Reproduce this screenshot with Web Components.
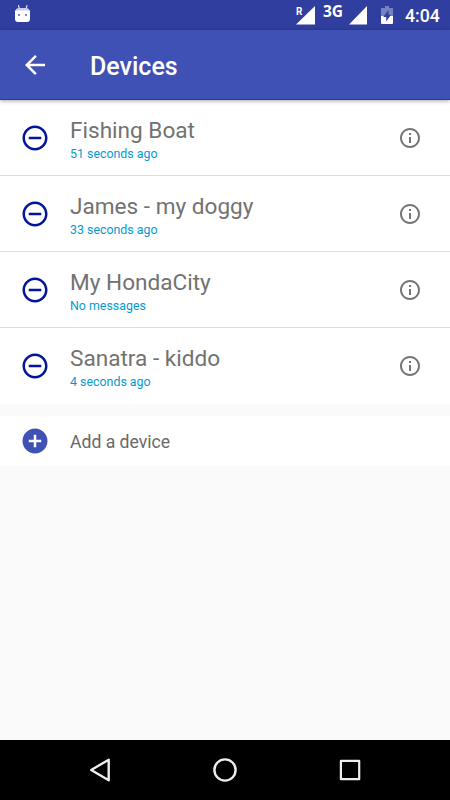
<!DOCTYPE html>
<html lang="en">
<head>
<meta charset="utf-8">
<title>Devices</title>
<style>
html, body { margin: 0; height: 100%; }
body { font-family: Roboto, "Noto Sans", sans-serif; background: #fafafa; overflow: hidden; }
</style>
</head>
<body>
<devices-screen></devices-screen>
<script>
function define(name, html) {
  const template = document.createElement('template');
  template.innerHTML = html;
  customElements.define(name, class extends HTMLElement {
    constructor() {
      super();
      this.attachShadow({ mode: 'open' }).append(template.content.cloneNode(true));
    }
  });
}

define('status-bar', `
<style>
:host { display: flex; align-items: center; height: 30px; background: #303f9f; color: #fff; flex: none; box-sizing: border-box; padding: 0 9px 0 14px; }
svg { display: block; flex: none; }
.space { flex: 1; }
.r { font: 700 10px/10px Roboto, sans-serif; align-self: flex-start; margin-top: 7px; width: 7px; margin-right: -7px; z-index: 1; }
.net { font: 700 15.5px/16px "Open Sans", sans-serif; align-self: flex-start; margin-top: 3px; width: 22px; margin-left: 8px; }
.sig2 { margin-left: 4px; }
.bat { margin-left: 14px; }
.time { font-size: 17.7px; line-height: 20px; font-weight: 500; margin-left: 12px; margin-top: 2px; width: 36px; white-space: nowrap; }
</style>
<svg width="17" height="30" viewBox="14 0 17 30">
  <path d="M18.5 5.5 19.3 8.5M27 5.5 26.2 8.5" stroke="#d3d6ec" stroke-width="1.2" stroke-linecap="round"/>
  <path d="M15.3 11Q16 8 19 8H26Q29 8 29.7 11Z" fill="#c8cce8"/>
  <path d="M15 10.5H30V19Q30 22 27 22H18Q15 22 15 19Z" fill="#fff"/>
  <path d="M18 14h2v2h-2zM25 14h2v2h-2z" fill="#8089c6"/>
</svg>
<span class="space"></span>
<span class="r">R</span>
<svg width="19" height="30"><path d="M0 24.5 19 6V24.5Z" fill="#fff"/></svg>
<span class="net">3G</span>
<svg class="sig2" width="18" height="30"><path d="M0 24.5 18 6V24.5Z" fill="#fff"/></svg>
<svg class="bat" width="12" height="30" viewBox="0 0 12 30">
  <path d="M4 6H8V8H12V16H0V8H4Z" fill="#7780c1"/>
  <path d="M0 16H12V23Q12 24 11 24H1Q0 24 0 23Z" fill="#fff"/>
  <path d="M7.5 10 2.2 17H5.2V21.5L10 14.7H7.5Z" fill="#303f9f"/>
</svg>
<span class="time">4:04</span>`);

define('app-bar', `
<style>
:host { display: flex; align-items: center; box-sizing: border-box; height: 70px; flex: none; padding-left: 20px; background: #3f51b5; color: #fff; border-bottom: 1px solid #2439a8; box-shadow: 0 1px 4px rgba(0,0,0,.35); z-index: 1; }
svg { display: block; flex: none; }
h1 { margin: 5px 0 0 40px; font-size: 25px; line-height: 30px; font-weight: 500; }
</style>
<svg width="30" height="30" viewBox="0 0 24 24"><path fill="#fff" d="M20 11H7.83l5.59-5.59L12 4l-8 8 8 8 1.41-1.41L7.83 13H20z"/></svg>
<h1><slot></slot></h1>`);

define('device-row', `
<style>
:host { display: flex; align-items: center; box-sizing: border-box; height: 76.1px; padding: 0 28px 0 20px; background: #fff; border-bottom: 1px solid #dedede; }
:host(:last-child) { border-bottom: 0; height: 75.7px; }
svg { display: block; flex: none; }
.text { flex: 1; align-self: flex-start; margin-left: 20px; padding-top: 17.8px; }
.name { font-size: 22.6px; line-height: 26px; color: #727272; }
.seen { font-size: 12.4px; line-height: 15px; color: #0899d0; margin-top: 2px; }
</style>
<svg width="30" height="30" viewBox="0 0 24 24"><path fill="#00149c" d="M7 11v2h10v-2H7zm5-9C6.48 2 2 6.48 2 12s4.48 10 10 10 10-4.48 10-10S17.52 2 12 2zm0 18c-4.41 0-8-3.59-8-8s3.59-8 8-8 8 3.59 8 8-3.59 8-8 8z"/></svg>
<div class="text"><div class="name"><slot name="name"></slot></div><div class="seen"><slot></slot></div></div>
<svg width="24" height="24" viewBox="0 0 24 24"><path fill="#757575" d="M11 17h2v-6h-2v6zm1-15C6.48 2 2 6.48 2 12s4.48 10 10 10 10-4.48 10-10S17.52 2 12 2zm0 18c-4.41 0-8-3.59-8-8s3.59-8 8-8 8 3.59 8 8-3.59 8-8 8zM11 9h2V7h-2v2z"/></svg>`);

define('add-row', `
<style>
:host { display: flex; align-items: center; box-sizing: border-box; height: 50px; margin-top: 12px; padding-left: 20px; background: #fff; color: #696969; font-size: 17.6px; line-height: 21px; }
svg { display: block; margin-right: 20px; }
span { padding-top: 3px; }
</style>
<svg width="30" height="30" viewBox="0 0 24 24"><path fill="#3f51b5" d="M12 2C6.48 2 2 6.48 2 12s4.48 10 10 10 10-4.48 10-10S17.52 2 12 2zm5 11h-4v4h-2v-4H7v-2h4V7h2v4h4v2z"/></svg>
<span><slot></slot></span>`);

define('nav-bar', `
<style>
:host { display: flex; align-items: center; justify-content: center; gap: 95px; height: 60px; background: #000; flex: none; }
svg { display: block; fill: none; stroke: #eee; stroke-width: 2.4; stroke-linejoin: round; }
</style>
<svg width="30" height="30"><path d="M6.2 15 23.7 4.7V25.3Z"/></svg>
<svg width="30" height="30"><circle cx="15" cy="15" r="10.6"/></svg>
<svg width="30" height="30"><rect x="5.9" y="5.9" width="18.3" height="18.3" stroke-width="2.2"/></svg>`);

define('devices-screen', `
<style>
:host { display: flex; flex-direction: column; height: 100vh; background: #fafafa; }
main { flex: 1; min-height: 0; }
</style>
<status-bar></status-bar>
<app-bar>Devices</app-bar>
<main>
  <section>
    <device-row><span slot="name">Fishing Boat</span>51 seconds ago</device-row>
    <device-row><span slot="name">James - my doggy</span>33 seconds ago</device-row>
    <device-row><span slot="name">My HondaCity</span>No messages</device-row>
    <device-row><span slot="name">Sanatra - kiddo</span>4 seconds ago</device-row>
  </section>
  <add-row>Add a device</add-row>
</main>
<nav-bar></nav-bar>`);
</script>
</body>
</html>
